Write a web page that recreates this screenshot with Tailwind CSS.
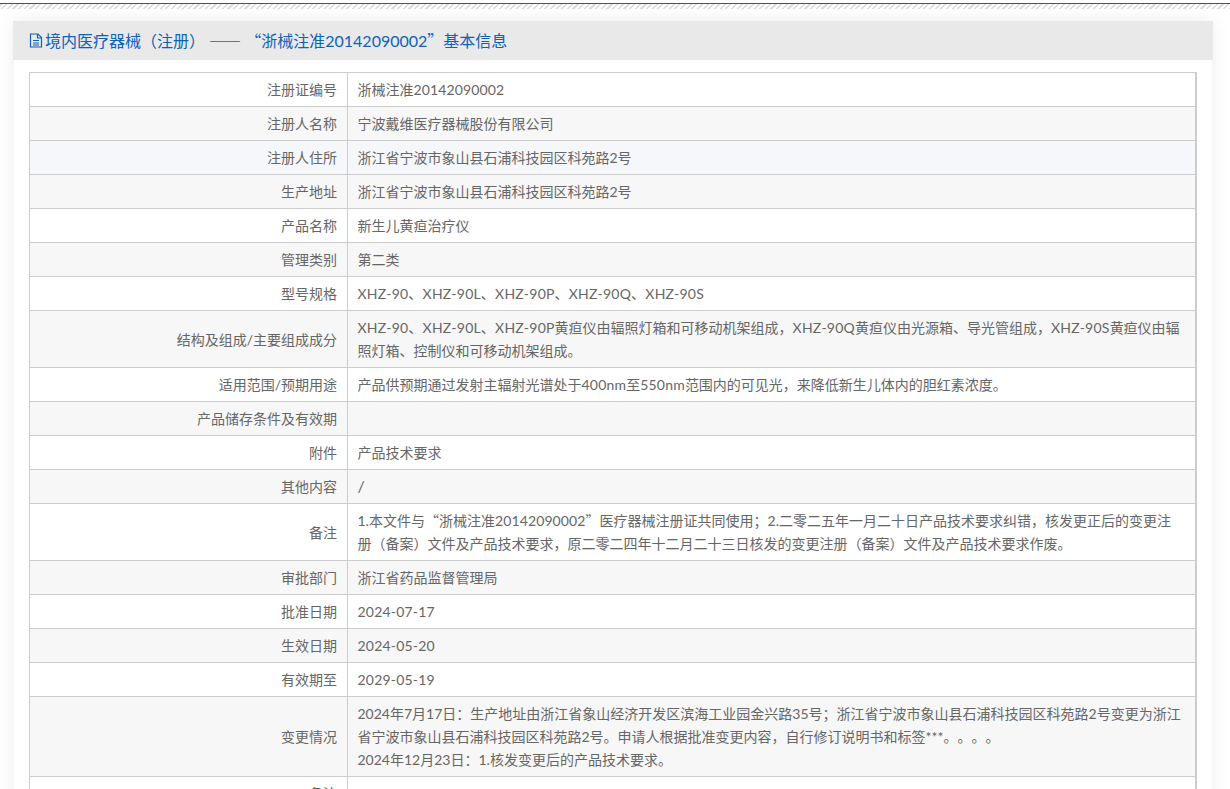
<!DOCTYPE html>
<html lang="zh-CN">
<head>
  <meta charset="UTF-8">
  <meta name="viewport" content="width=device-width, initial-scale=1.0">
  <title>基本信息</title>
  <script src="https://cdn.jsdelivr.net/npm/@tailwindcss/browser@4"></script>
</head>
<body class="bg-white h-[789px] overflow-hidden font-['Lato','Noto_Sans_CJK_SC',sans-serif] text-[14px] leading-[23px] text-[#666] [text-spacing-trim:space-all]">
  <!-- top rule -->
  <div class="h-[3px]"></div>
  <div class="h-px bg-[#0f5fb0]"></div>
  <div class="h-[5px] bg-[repeating-linear-gradient(135deg,#dcdcdc_0,#dcdcdc_1.5px,#fff_1.5px,#fff_4px)]"></div>

  <!-- panel -->
  <div class="mt-[12px] ml-[14px] w-[1198px] bg-white shadow-[0_0_18px_rgba(0,0,0,0.08)]">
    <div class="flex items-center h-[39px] -mx-px pl-[16px] bg-[#e9e9e9] text-[16px] text-[#0d62b8]">
      <svg class="w-[14px] h-[15px] mr-[2px] shrink-0" viewBox="0 0 14 15" fill="none" stroke="#0d62b8" stroke-width="1.2">
        <path d="M1.5 1h7.5l3.5 3.5v9.5h-11z"/>
        <path d="M8.5 1v4h4"/>
        <path d="M4 7.5h6M4 10h6M4 12h6"/>
      </svg>
      <h1>境内医疗器械（注册） <span class="font-['Noto_Sans_CJK_SC']">——</span> <span class="font-['Noto_Sans_CJK_SC']">“</span>浙械注准20142090002<span class="font-['Noto_Sans_CJK_SC']">”</span>基本信息</h1>
    </div>

    <div class="pt-[12px] px-[15px]">
      <table class="w-[1168px] table-fixed border-separate border-spacing-0 border-t border-l border-r-2 border-[#ccc]">
        <colgroup>
          <col class="w-[318px]">
          <col>
        </colgroup>
        <tbody>
          <tr>
            <td class="px-[10px] py-[5px] text-right border-b border-r border-[#ccc]">注册证编号</td>
            <td class="pl-[9.5px] pr-[10px] py-[5px] border-b border-[#ccc]">浙械注准<span class="tracking-[0.12px]">20142090002</span></td>
          </tr>
          <tr class="bg-[#f7f7f7]">
            <td class="px-[10px] py-[5px] text-right border-b border-r border-[#ccc]">注册人名称</td>
            <td class="pl-[9.5px] pr-[10px] py-[5px] border-b border-[#ccc]">宁波戴维医疗器械股份有限公司</td>
          </tr>
          <tr class="bg-[#f5f7fb]">
            <td class="px-[10px] py-[5px] text-right border-b border-r border-[#ccc]">注册人住所</td>
            <td class="pl-[9.5px] pr-[10px] py-[5px] border-b border-[#ccc]">浙江省宁波市象山县石浦科技园区科苑路2号</td>
          </tr>
          <tr class="bg-[#f7f7f7]">
            <td class="px-[10px] py-[5px] text-right border-b border-r border-[#ccc]">生产地址</td>
            <td class="pl-[9.5px] pr-[10px] py-[5px] border-b border-[#ccc]">浙江省宁波市象山县石浦科技园区科苑路2号</td>
          </tr>
          <tr>
            <td class="px-[10px] py-[5px] text-right border-b border-r border-[#ccc]">产品名称</td>
            <td class="pl-[9.5px] pr-[10px] py-[5px] border-b border-[#ccc]">新生儿黄疸治疗仪</td>
          </tr>
          <tr class="bg-[#f7f7f7]">
            <td class="px-[10px] py-[5px] text-right border-b border-r border-[#ccc]">管理类别</td>
            <td class="pl-[9.5px] pr-[10px] py-[5px] border-b border-[#ccc]">第二类</td>
          </tr>
          <tr>
            <td class="px-[10px] py-[5px] text-right border-b border-r border-[#ccc]">型号规格</td>
            <td class="pl-[9.5px] pr-[10px] py-[5px] border-b border-[#ccc] tracking-[0.22px]">XHZ-90、XHZ-90L、XHZ-90P、XHZ-90Q、XHZ-90S</td>
          </tr>
          <tr class="bg-[#f7f7f7]">
            <td class="px-[10px] py-[5px] text-right border-b border-r border-[#ccc]">结构及组成/主要组成成分</td>
            <td class="pl-[9.5px] pr-[10px] py-[5px] border-b border-[#ccc]"><span class="tracking-[0.22px]">XHZ-90、XHZ-90L、XHZ-90P</span>黄疸仪由辐照灯箱和可移动机架组成，<span class="tracking-[0.22px]">XHZ-90Q</span>黄疸仪由光源箱、导光管组成，<span class="tracking-[0.22px]">XHZ-90S</span>黄疸仪由辐<br>照灯箱、控制仪和可移动机架组成。</td>
          </tr>
          <tr>
            <td class="px-[10px] py-[5px] text-right border-b border-r border-[#ccc]">适用范围/预期用途</td>
            <td class="pl-[9.5px] pr-[10px] py-[5px] border-b border-[#ccc]">产品供预期通过发射主辐射光谱处于<span class="tracking-[0.2px]">400nm</span>至<span class="tracking-[0.2px]">550nm</span>范围内的可见光，来降低新生儿体内的胆红素浓度。</td>
          </tr>
          <tr class="bg-[#f7f7f7]">
            <td class="px-[10px] py-[5px] text-right border-b border-r border-[#ccc]">产品储存条件及有效期</td>
            <td class="pl-[9.5px] pr-[10px] py-[5px] border-b border-[#ccc]"></td>
          </tr>
          <tr>
            <td class="px-[10px] py-[5px] text-right border-b border-r border-[#ccc]">附件</td>
            <td class="pl-[9.5px] pr-[10px] py-[5px] border-b border-[#ccc]">产品技术要求</td>
          </tr>
          <tr class="bg-[#f7f7f7]">
            <td class="px-[10px] py-[5px] text-right border-b border-r border-[#ccc]">其他内容</td>
            <td class="pl-[9.5px] pr-[10px] py-[5px] border-b border-[#ccc]"><span class="text-[16px] leading-none">/</span></td>
          </tr>
          <tr>
            <td class="px-[10px] py-[5px] text-right border-b border-r border-[#ccc]">备注</td>
            <td class="pl-[9.5px] pr-[10px] py-[5px] border-b border-[#ccc]">1.本文件与<span class="font-['Noto_Sans_CJK_SC']">“</span>浙械注准<span class="tracking-[0.12px]">20142090002</span><span class="font-['Noto_Sans_CJK_SC']">”</span>医疗器械注册证共同使用；2.二零二五年一月二十日产品技术要求纠错，核发更正后的变更注<br>册（备案）文件及产品技术要求，原二零二四年十二月二十三日核发的变更注册（备案）文件及产品技术要求作废。</td>
          </tr>
          <tr class="bg-[#f7f7f7]">
            <td class="px-[10px] py-[5px] text-right border-b border-r border-[#ccc]">审批部门</td>
            <td class="pl-[9.5px] pr-[10px] py-[5px] border-b border-[#ccc]">浙江省药品监督管理局</td>
          </tr>
          <tr>
            <td class="px-[10px] py-[5px] text-right border-b border-r border-[#ccc]">批准日期</td>
            <td class="pl-[9.5px] pr-[10px] py-[5px] border-b border-[#ccc] tracking-[0.2px]">2024-07-17</td>
          </tr>
          <tr class="bg-[#f7f7f7]">
            <td class="px-[10px] py-[5px] text-right border-b border-r border-[#ccc]">生效日期</td>
            <td class="pl-[9.5px] pr-[10px] py-[5px] border-b border-[#ccc] tracking-[0.2px]">2024-05-20</td>
          </tr>
          <tr>
            <td class="px-[10px] py-[5px] text-right border-b border-r border-[#ccc]">有效期至</td>
            <td class="pl-[9.5px] pr-[10px] py-[5px] border-b border-[#ccc] tracking-[0.2px]">2029-05-19</td>
          </tr>
          <tr class="bg-[#f7f7f7]">
            <td class="px-[10px] py-[5px] text-right border-b border-r border-[#ccc]">变更情况</td>
            <td class="pl-[9.5px] pr-[10px] py-[5px] border-b border-[#ccc]">2024年7月17日：生产地址由浙江省象山经济开发区滨海工业园金兴路35号；浙江省宁波市象山县石浦科技园区科苑路2号变更为浙江<br>省宁波市象山县石浦科技园区科苑路2号。申请人根据批准变更内容，自行修订说明书和标签***。。。。<br>2024年12月23日：1.核发变更后的产品技术要求。</td>
          </tr>
          <tr>
            <td class="px-[10px] py-[5px] text-right border-b border-r border-[#ccc]">备注</td>
            <td class="pl-[9.5px] pr-[10px] py-[5px] border-b border-[#ccc]"></td>
          </tr>
        </tbody>
      </table>
    </div>
  </div>
</body>
</html>
